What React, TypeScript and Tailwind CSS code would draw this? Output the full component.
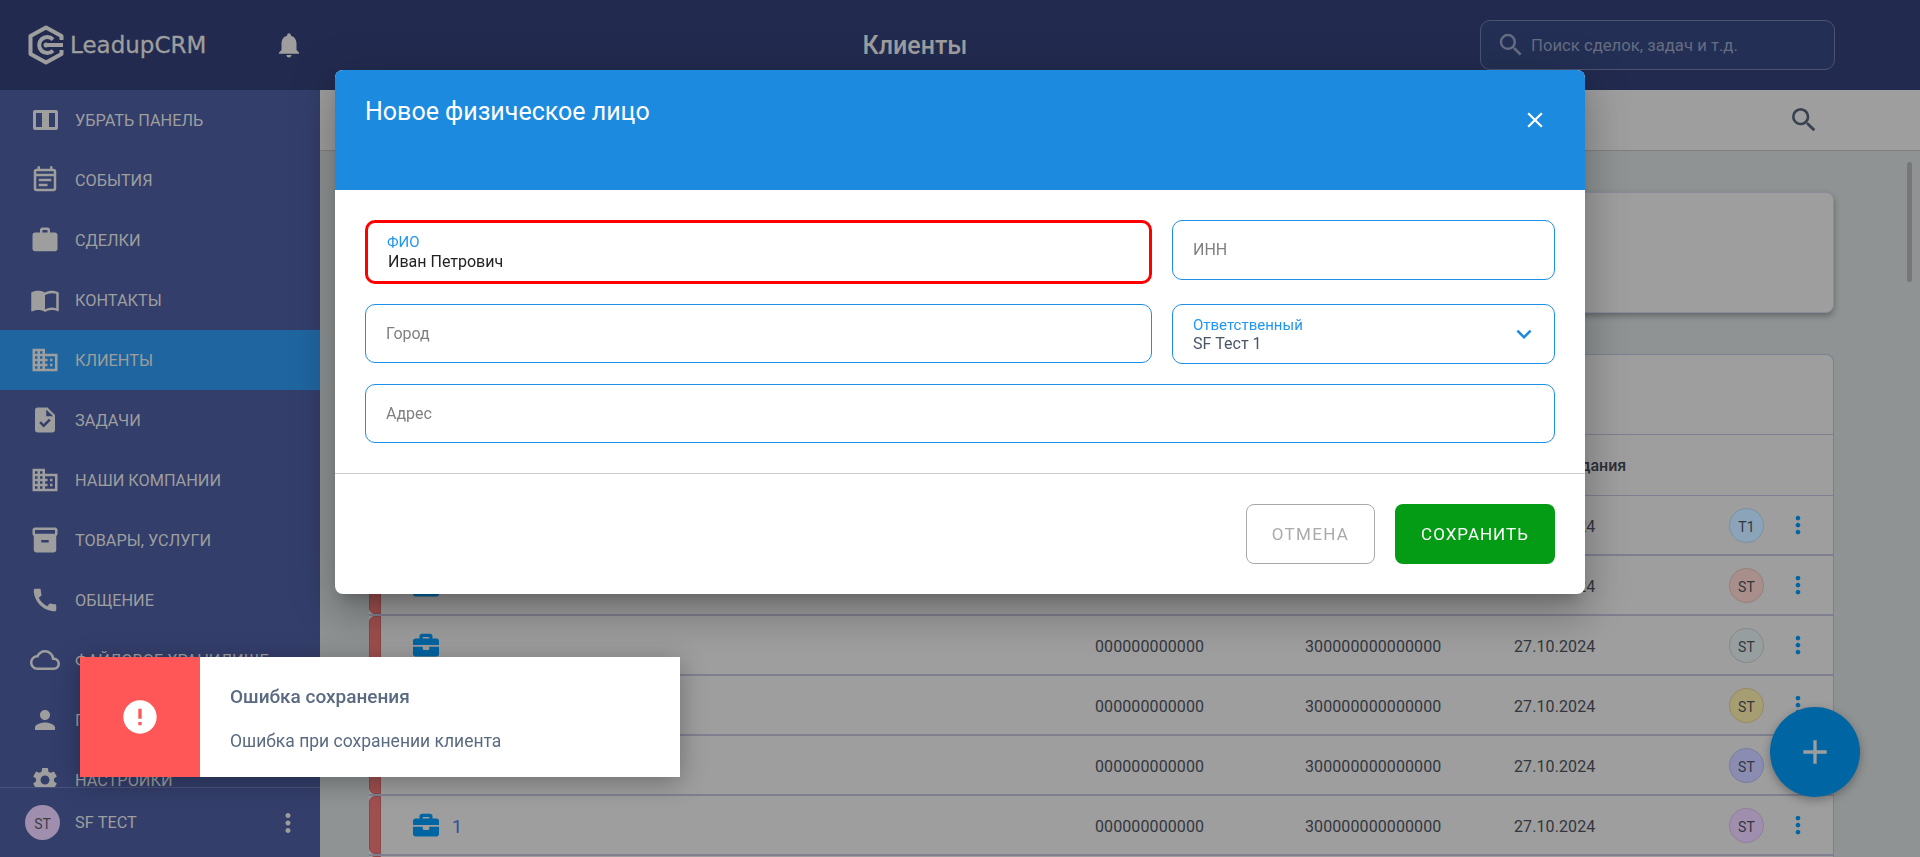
import type { ReactNode } from "react";
import { FaBriefcase } from "react-icons/fa";
import {
  MdAdd,
  MdCall,
  MdClose,
  MdCloudQueue,
  MdDomain,
  MdError,
  MdImportContacts,
  MdInventory2,
  MdKeyboardArrowDown,
  MdMoreVert,
  MdNotifications,
  MdOutlineEventNote,
  MdPerson,
  MdSearch,
  MdSettings,
  MdTask,
  MdWork,
} from "react-icons/md";

function PanelIcon() {
  return (
    <svg viewBox="0 0 25 20" className="h-5 w-[25px]" fill="currentColor" fillRule="evenodd">
      <path d="M2 0h21a2 2 0 0 1 2 2v16a2 2 0 0 1-2 2H2a2 2 0 0 1-2-2V2a2 2 0 0 1 2-2zm1 3v14h6V3H3zm13 0v14h6V3h-6z" />
    </svg>
  );
}

function Logo() {
  return (
    <svg viewBox="0 0 36 40" className="h-10 w-9" fill="none" stroke="#9e9e9e">
      <path d="M33.500 15V11L18 2.500 2.500 11v18L18 37.500 33.500 29v-4" strokeWidth="4" strokeLinejoin="round" />
      <path d="M25 14.500A8 8 0 1 0 25 25.500" strokeWidth="4" />
      <path d="M18 20h17" strokeWidth="4" />
      <circle cx="18" cy="20" r="2.500" fill="#9e9e9e" stroke="none" />
    </svg>
  );
}

const NAV: { label: string; icon: ReactNode; active?: boolean }[] = [
  { label: "УБРАТЬ ПАНЕЛЬ", icon: <PanelIcon /> },
  { label: "СОБЫТИЯ", icon: <MdOutlineEventNote size={30} /> },
  { label: "СДЕЛКИ", icon: <MdWork size={30} /> },
  { label: "КОНТАКТЫ", icon: <MdImportContacts size={30} /> },
  { label: "КЛИЕНТЫ", icon: <MdDomain size={30} />, active: true },
  { label: "ЗАДАЧИ", icon: <MdTask size={30} /> },
  { label: "НАШИ КОМПАНИИ", icon: <MdDomain size={30} /> },
  { label: "ТОВАРЫ, УСЛУГИ", icon: <MdInventory2 size={30} /> },
  { label: "ОБЩЕНИЕ", icon: <MdCall size={30} /> },
  { label: "ФАЙЛОВОЕ ХРАНИЛИЩЕ", icon: <MdCloudQueue size={30} /> },
  { label: "ПРОФИЛЬ", icon: <MdPerson size={30} /> },
  { label: "НАСТРОЙКИ", icon: <MdSettings size={30} /> },
];

const ROWS = [
  { name: "", initials: "T1", avatar: "bg-[#8ba4b9] border-[#7d8f9f]" },
  { name: "", initials: "ST", avatar: "bg-[#a88f8b] border-[#96807c]" },
  { name: "", initials: "ST", avatar: "bg-[#969ea0] border-[#85898b]" },
  { name: "", initials: "ST", avatar: "bg-[#a79d72] border-[#948b63]" },
  { name: "", initials: "ST", avatar: "bg-[#8a8cb1] border-[#7b7d9f]" },
  { name: "1", initials: "ST", avatar: "bg-[#a08eae] border-[#8f7f9c]" },
  { name: "1", initials: "ST", avatar: "bg-[#8ba4b9] border-[#7d8f9f]" },
];

const inputBox = "flex h-[59px] items-center rounded-[10px] border border-[#1c8fe6] px-5 text-base text-[#808080]";

function Header() {
  return (
    <header className="flex h-[90px] shrink-0 items-center bg-[#222b4f] text-[#9e9e9e]">
      <div className="flex w-[320px] shrink-0 items-center pl-7">
        <Logo />
        <span className="ml-1.5 font-['DejaVu_Sans'] text-[23px] [-webkit-text-stroke:0.3px_#9e9e9e]">LeadupCRM</span>
        <MdNotifications size={30} className="ml-[68px]" />
      </div>
      <h1 className="flex-1 pl-[30px] pt-0.5 text-center text-[25px] font-medium">Клиенты</h1>
      <div className="mr-[85px] flex h-[50px] w-[355px] items-center rounded-[10px] border border-[#4c5370] bg-[#232f54] pl-[15px] text-[#666d83]">
        <MdSearch size={30} />
        <span className="ml-[5px] pt-0.5 text-[16.7px]">Поиск сделок, задач и т.д.</span>
      </div>
    </header>
  );
}

function Sidebar() {
  return (
    <aside className="flex w-[320px] shrink-0 flex-col overflow-hidden bg-[#333e6b] text-[#9e9e9e]">
      <nav className="min-h-0 flex-1 overflow-hidden">
        {NAV.map((item) => (
          <div key={item.label} className={`flex h-[60px] items-center ${item.active ? "bg-[#1f659f]" : ""}`}>
            <span className="flex w-[75px] shrink-0 justify-center pl-[15px]">{item.icon}</span>
            <span className="pt-0.5 text-[16.3px]">{item.label}</span>
          </div>
        ))}
      </nav>
      <div className="flex h-[70px] shrink-0 items-center border-t border-[#4a5379] pl-[25px] pr-[17px]">
        <span className="flex h-[35px] w-[35px] items-center justify-center rounded-full bg-[#a08eae] pt-0.5 text-sm text-[#3d3f45]">ST</span>
        <span className="ml-[15px] flex-1 pt-0.5 text-[16.3px]">SF ТЕСТ</span>
        <MdMoreVert size={30} />
      </div>
    </aside>
  );
}

function TableRow({ row }: { row: (typeof ROWS)[number] }) {
  return (
    <div className="flex h-[60px] shrink-0 border-b-2 border-[#7e8091] text-base tracking-[0.1px] text-[#33363d]">
      <div className="w-3 shrink-0 rounded-l-md border border-[#8a4848] bg-[#a04f4f]" />
      <div className="grid flex-1 grid-cols-[714px_210px_209px_215px_55px_28px] items-center">
        <div className="flex items-center pl-8">
          <FaBriefcase size={26} className="text-[#0065a3]" />
          <span className="ml-[13px] pt-[3px] text-lg text-[#2e4a9a]">{row.name}</span>
        </div>
        <span className="pt-[3px]">000000000000</span>
        <span className="pt-[3px]">300000000000000</span>
        <span className="pt-[3px]">27.10.2024</span>
        <span className={`flex h-[35px] w-[35px] items-center justify-center rounded-full border pt-[3px] text-sm ${row.avatar}`}>{row.initials}</span>
        <MdMoreVert size={28} className="text-[#0065a3]" />
      </div>
    </div>
  );
}

function Main() {
  return (
    <main className="relative min-w-0 flex-1 overflow-hidden bg-[#8f9393]">
      <div className="flex h-[61px] items-center justify-end border-b border-[#808080] bg-[#9e9e9e] pr-[100px] text-[#37414f]">
        <MdSearch size={32} />
      </div>
      <div className="absolute right-2 top-[72px] h-[120px] w-[5px] rounded-full bg-[#777777]" />
      <div className="ml-[49px] mr-[86px] pt-[41px]">
        <div className="h-[121px] rounded-lg border border-[#8a8c9c] bg-[#9e9e9e] shadow-[0_3px_6px_rgba(0,0,0,0.3)]" />
        <div className="mt-[41px] overflow-hidden rounded-t-lg border-r border-t border-[#7e8091] bg-[#9e9e9e]">
          <div className="h-[80px] border-b border-[#7e8091]" />
          <div className="grid h-[61px] grid-cols-[1145px_1fr] items-center border-b border-[#7e8091] pt-0.5 text-base font-medium text-[#2c2f36]">
            <span />
            <span>Дата создания</span>
          </div>
          {ROWS.map((row, i) => (
            <TableRow key={i} row={row} />
          ))}
        </div>
      </div>
      <button className="absolute bottom-[60px] right-[60px] flex h-[90px] w-[90px] items-center justify-center rounded-full bg-[#0065a3] text-[#9e9e9e] shadow-[0_3px_10px_rgba(0,0,0,0.3)]">
        <MdAdd size={40} />
      </button>
    </main>
  );
}

function ClientDialog() {
  return (
    <div className="fixed inset-0 flex justify-center pt-[70px]">
      <div className="h-[524px] w-[1250px] overflow-hidden rounded-lg bg-white shadow-[0_11px_15px_-7px_rgba(0,0,0,0.2),0_24px_38px_3px_rgba(0,0,0,0.14),0_9px_46px_8px_rgba(0,0,0,0.12)]">
        <div className="flex h-[120px] items-start justify-between bg-[#1c8adf] pl-[30px] pr-[37px] text-white">
          <h2 className="pt-[23px] text-[25px]">Новое физическое лицо</h2>
          <MdClose size={26} className="mt-[37px]" />
        </div>
        <div className="grid grid-cols-[787px_383px] items-start gap-x-5 px-[30px] pt-[30px]">
          <div className="flex h-16 flex-col justify-center rounded-[10px] border-[3px] border-[#ff0000] pl-[19px] pt-[2px]">
            <span className="text-[15px] leading-4 text-[#2196f3]">ФИО</span>
            <span className="mt-[2px] pl-px text-base leading-5 text-[#222222]">Иван Петрович</span>
          </div>
          <div className={`${inputBox} h-[60px]`}>ИНН</div>
          <div className={`${inputBox} mt-5`}>Город</div>
          <div className="mt-5 flex h-[60px] items-center rounded-[10px] border border-[#1c8fe6] pl-5 pr-[15px]">
            <div className="flex flex-1 flex-col pt-[2px]">
              <span className="text-[15px] leading-4 text-[#2196f3]">Ответственный</span>
              <span className="mt-px text-base leading-5 text-[#4a5568]">SF Тест 1</span>
            </div>
            <MdKeyboardArrowDown size={30} className="text-[#1c8adf]" />
          </div>
          <div className={`${inputBox} col-span-2 mt-5`}>Адрес</div>
        </div>
        <div className="mt-[30px] flex justify-end gap-5 border-t border-[#cccccc] px-[30px] pt-[30px]">
          <button className="h-[60px] w-[129px] rounded-lg border border-[#a8a8a8] pt-0.5 text-[17px] tracking-[1.3px] text-[#aaaaaa]">ОТМЕНА</button>
          <button className="h-[60px] w-40 rounded-lg bg-[#049c14] pt-0.5 text-[17px] tracking-[1px] text-white">СОХРАНИТЬ</button>
        </div>
      </div>
    </div>
  );
}

function ErrorToast() {
  return (
    <div className="fixed bottom-20 left-20 flex h-[120px] w-[600px] bg-white shadow-[0_5px_25px_rgba(0,0,0,0.3)]">
      <div className="flex w-[120px] items-center justify-center bg-[#ff5757] text-white">
        <MdError size={40} />
      </div>
      <div className="flex flex-col justify-center gap-[22px] pl-[30px] pt-[3px] text-[#5a6a80]">
        <p className="text-[19px] font-medium leading-[22px]">Ошибка сохранения</p>
        <p className="text-[17.5px] leading-[22px]">Ошибка при сохранении клиента</p>
      </div>
    </div>
  );
}

export default function App() {
  return (
    <div className="flex h-screen flex-col overflow-hidden font-['Roboto',sans-serif]">
      <Header />
      <div className="flex min-h-0 flex-1">
        <Sidebar />
        <Main />
      </div>
      <ClientDialog />
      <ErrorToast />
    </div>
  );
}
